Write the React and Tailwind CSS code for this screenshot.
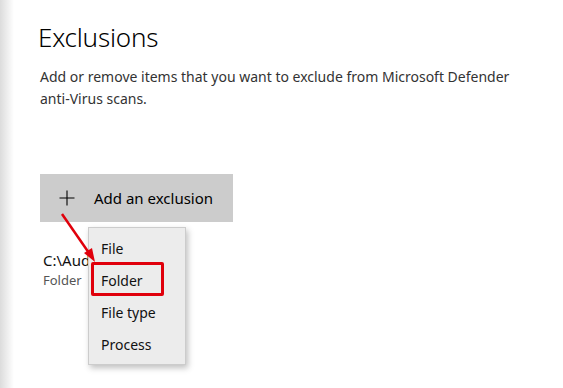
export default function App() {
  const items = ["File", "Folder", "File type", "Process"];

  return (
    <div className="relative w-[563px] h-[388px] overflow-hidden bg-white font-['Noto_Sans',sans-serif] text-black">
      {/* left edge shade */}
      <div className="absolute left-0 top-0 h-full w-[14px] bg-gradient-to-r from-[#dcdcdc] to-white" />

      <div className="pl-[38px] pt-[19px]">
        <h1 className="text-[26px] font-light leading-[36px] tracking-[-0.2px]">Exclusions</h1>
        <p className="mt-[11px] ml-[2px] w-[500px] text-[14px] leading-[22px] text-[#333]">
          Add or remove items that you want to exclude from Microsoft Defender anti-Virus scans.
        </p>

        <button className="mt-[64px] ml-[2px] flex h-[48px] w-[193px] items-center bg-[#cccccc] pl-[19px] text-[15px] text-black">
          <svg width="16" height="16" viewBox="0 0 16 16" className="mr-[19px]">
            <path d="M8 0.5V15.5M0.5 8H15.5" stroke="#000" strokeWidth="1.1" fill="none" />
          </svg>
          Add an exclusion
        </button>

        <div className="mt-[28px] ml-[5px]">
          <div className="text-[15px] leading-[20px] text-[#111]">C:\Aud</div>
          <div className="text-[13px] leading-[20px] text-[#555]">Folder</div>
        </div>
      </div>

      {/* context menu */}
      <div className="absolute left-[88px] top-[227px] w-[98px] border border-[#cccccc] bg-[#ececec] py-[4px] shadow-[2px_3px_6px_rgba(0,0,0,0.25)]">
        {items.map((item) => (
          <div key={item} className="flex h-[32px] items-center pl-[12px] text-[14px] text-[#111]">
            {item}
          </div>
        ))}
      </div>

      {/* highlight box */}
      <div className="absolute left-[91px] top-[262px] h-[34px] w-[73px] rounded-[2px] border-[3px] border-[#e0000b]" />

      {/* arrow */}
      <svg className="absolute left-0 top-0" width="563" height="388">
        <line x1="62" y1="214" x2="89" y2="253" stroke="#e0000b" strokeWidth="2.5" />
        <polygon points="95,262 84,253 92,248" fill="#e0000b" />
      </svg>
    </div>
  );
}
